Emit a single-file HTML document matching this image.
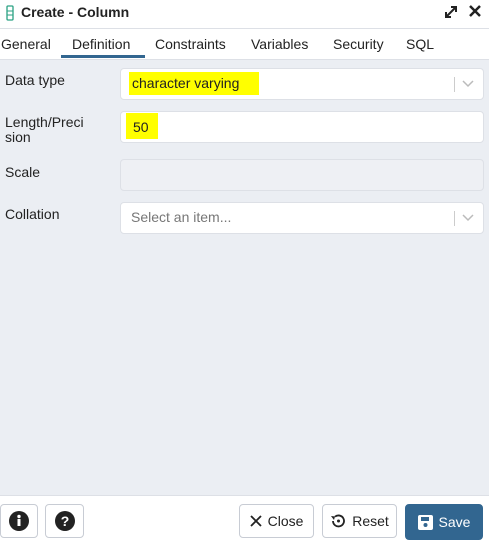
<!DOCTYPE html>
<html><head><style>
body{margin:0;width:489px;height:545px;overflow:hidden;font-family:"Liberation Sans",sans-serif;background:#fff;position:relative;color:#222}
.a{position:absolute}
.hdr{left:0;top:0;width:489px;height:28px;border-bottom:1px solid #dde0e6}
.tabs{top:29px;left:0;width:489px;height:30px;border-bottom:1px solid #dde0e6}
.tab{position:absolute;top:7px;font-size:14px;color:#222}
.content{top:60px;left:0;width:489px;height:435px;background:#ebeef3}
.lbl{font-size:14px;color:#222;left:5px}
.box{left:120px;width:362px;background:#fff;border:1px solid #dde0e6;border-radius:4px;height:30px}
.btn{border:1px solid #c8ccd4;border-radius:4px;background:#fff;top:504px;height:32px;font-size:14px;display:flex;align-items:center;justify-content:center;gap:6px}
</style></head><body>
<div class="a hdr">
 <svg class="a" style="left:6px;top:5px" width="8" height="16"><rect x="1" y="1" width="6" height="14" rx="1" fill="none" stroke="#2aa283" stroke-width="1.3"/><line x1="1" y1="6" x2="7" y2="6" stroke="#2aa283"/><line x1="1" y1="10" x2="7" y2="10" stroke="#2aa283"/></svg>
 <div class="a" style="left:21px;top:4px;font-size:14px;font-weight:600;color:#222">Create - Column</div>
 <svg class="a" style="left:444px;top:5px" width="14" height="14"><path d="M2 12L12 2M7 2h5v5M2 7v5h5" stroke="#222" stroke-width="2" fill="none"/></svg>
 <svg class="a" style="left:469px;top:5px" width="12" height="12"><path d="M1 1L11 11M11 1L1 11" stroke="#222" stroke-width="2.5"/></svg>
</div>
<div class="a tabs">
 <span class="tab" style="left:1px">General</span>
 <span class="tab" style="left:72px">Definition</span>
 <span class="tab" style="left:155px">Constraints</span>
 <span class="tab" style="left:251px">Variables</span>
 <span class="tab" style="left:333px">Security</span>
 <span class="tab" style="left:406px">SQL</span>
 <div class="a" style="left:61px;top:26px;width:84px;height:3px;background:#326690"></div>
</div>
<div class="a content">
 <div class="a lbl" style="top:12px">Data type</div>
 <div class="a box" style="top:8px"><div class="a" style="left:8px;top:3px;width:130px;height:23px;background:#ffff00"></div><span class="a" style="left:11px;top:6px;font-size:14px">character varying</span><div class="a" style="left:333px;top:8px;width:1px;height:15px;background:#ccc"></div><svg class="a" style="left:341px;top:11px" width="12" height="8"><path d="M1 1l5 5 5-5" stroke="#bbb" fill="none" stroke-width="1.5"/></svg></div>
 <div class="lbl a" style="top:55px;line-height:15px">Length/Preci<br>sion</div>
 <div class="a box" style="top:51px"><div class="a" style="left:5px;top:1px;width:32px;height:26px;background:#ffff00"></div><span class="a" style="left:12px;top:7px;font-size:14px">50</span></div>
 <div class="a lbl" style="top:104px">Scale</div>
 <div class="a box" style="top:99px;background:#eef0f4"></div>
 <div class="a lbl" style="top:146px">Collation</div>
 <div class="a box" style="top:142px"><span class="a" style="left:10px;top:6px;font-size:14px;color:#777">Select an item...</span><div class="a" style="left:333px;top:8px;width:1px;height:15px;background:#ccc"></div><svg class="a" style="left:341px;top:11px" width="12" height="8"><path d="M1 1l5 5 5-5" stroke="#bbb" fill="none" stroke-width="1.5"/></svg></div>
</div>
<div class="a" style="top:495px;left:0;width:489px;height:1px;background:#dde0e6"></div>
<div class="a btn" style="left:0;width:36px"><svg width="20" height="20"><circle cx="10" cy="10" r="10" fill="#222"/><rect x="8.5" y="8" width="3" height="7" fill="#fff"/><circle cx="10" cy="5.5" r="1.7" fill="#fff"/></svg></div>
<div class="a btn" style="left:45px;width:37px"><svg width="20" height="20"><circle cx="10" cy="10" r="10" fill="#222"/><text x="10" y="15" font-size="14" font-weight="bold" text-anchor="middle" fill="#fff" font-family="Liberation Sans">?</text></svg></div>
<div class="a btn" style="left:239px;width:73px"><svg width="12" height="12"><path d="M1 1L11 11M11 1L1 11" stroke="#222" stroke-width="1.8"/></svg>Close</div>
<div class="a btn" style="left:322px;width:73px"><svg width="16" height="16"><path d="M3 8a5.5 5.5 0 1 0 2-4.3" stroke="#222" stroke-width="1.8" fill="none"/><path d="M1 3l4 0.5-1 3.5z" fill="#222"/><circle cx="8.5" cy="8" r="1.5" fill="#222"/></svg>Reset</div>
<div class="a btn" style="left:405px;width:76px;height:34px;background:#326690;border-color:#326690;color:#fff"><svg width="15" height="15"><rect x="0" y="0" width="15" height="15" rx="2" fill="#fff"/><rect x="3" y="2" width="8" height="4" fill="#326690"/><circle cx="7.5" cy="10" r="2" fill="#326690"/></svg>Save</div>
</body></html>
